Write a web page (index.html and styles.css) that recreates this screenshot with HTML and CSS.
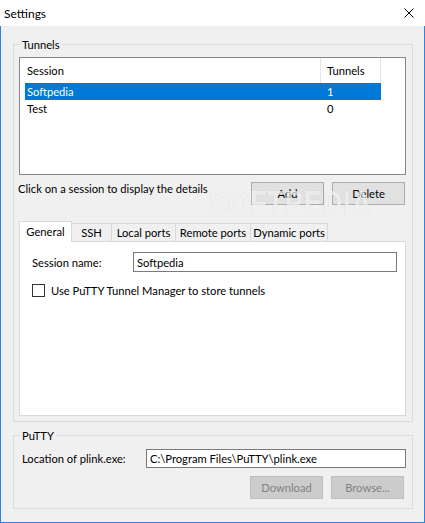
FILE: index.html
```html
<!DOCTYPE html>
<html lang="en">
<head>
    <meta charset="UTF-8">
    <title>Settings</title>
    <link rel="stylesheet" href="styles.css">
</head>
<body>
    <div class="window">
        <div class="titlebar">
            <span class="title">Settings</span>
            <svg class="close" width="10" height="10" viewBox="0 0 10 10">
                <path d="M0.5 0.5 L9.5 9.5 M9.5 0.5 L0.5 9.5" stroke="#000" stroke-width="1" fill="none"/>
            </svg>
        </div>

        <div class="client">
            <fieldset class="group group-tunnels">
                <legend>Tunnels</legend>

                <div class="listview">
                    <div class="lv-header">
                        <div class="lv-col lv-col-session">Session</div>
                        <div class="lv-col lv-col-count">Tunnels</div>
                    </div>
                    <div class="lv-row selected"><span>Softpedia</span><span class="count">1</span></div>
                    <div class="lv-row"><span>Test</span><span class="count">0</span></div>
                </div>

                <div class="actions">
                    <span class="hint">Click on a session to display the details</span>
                    <button class="btn">Add</button>
                    <button class="btn">Delete</button>
                </div>

                <div class="tabs">
                    <div class="tab active tab-general">General</div>
                    <div class="tab tab-ssh">SSH</div>
                    <div class="tab tab-local">Local ports</div>
                    <div class="tab tab-remote">Remote ports</div>
                    <div class="tab tab-dynamic">Dynamic ports</div>
                </div>
                <div class="tab-panel">
                    <div class="field">
                        <label class="field-label">Session name:</label>
                        <input class="textbox session-input" type="text" value="Softpedia">
                    </div>
                    <label class="check">
                        <span class="box"></span>
                        Use PuTTY Tunnel Manager to store tunnels
                    </label>
                </div>
            </fieldset>

            <fieldset class="group group-putty">
                <legend>PuTTY</legend>
                <div class="field plink-field">
                    <label class="field-label">Location of plink.exe:</label>
                    <input class="textbox plink-input" type="text" value="C:\Program Files\PuTTY\plink.exe">
                </div>
                <div class="putty-buttons">
                    <button class="btn" disabled>Download</button>
                    <button class="btn" disabled>Browse...</button>
                </div>
            </fieldset>
        </div>

        <div class="watermark">SOFTPEDIA</div>
    </div>
</body>
</html>
```

FILE: styles.css
```css
body {
    margin: 0;
    font-family: Lato, "Noto Sans", sans-serif;
    font-size: 11.2px;
    color: #000;
    background: #f0f0f0;
}
.window {
    position: relative;
    width: 425px;
    height: 523px;
    display: flex;
    flex-direction: column;
    background: #f0f0f0;
}
.titlebar {
    height: 26px;
    flex: none;
    background: #fff;
    display: flex;
    align-items: center;
    justify-content: space-between;
    padding-left: 4px;
    font-size: 12px;
}
.close {
    margin-right: 11px;
}
.client {
    flex: 1;
    border: 1px solid #2b85d8;
    border-top: 0;
    padding: 0 11px 0 12px;
}

/* group boxes */
.group {
    margin: 0;
    border: 1px solid #dcdcdc;
    padding: 0 6px 0 5px;
    width: 387px;
}
.group legend {
    padding: 0 2px;
    margin-left: 1px;
    line-height: 15px;
}
.group-tunnels {
    margin-top: 11px;
    padding-top: 5px;
    padding-bottom: 5px;
}
.group-putty {
    margin-top: 6px;
    padding-top: 6px;
    padding-bottom: 9px;
}

/* session list */
.listview {
    height: 116px;
    border: 1px solid #828790;
    background: #fff;
}
.lv-header {
    display: flex;
    height: 25px;
}
.lv-col {
    line-height: 25px;
    border-right: 1px solid #e5e5e5;
}
.lv-col-session {
    width: 293px;
    padding-left: 7px;
}
.lv-col-count {
    width: 53px;
    padding-left: 6px;
}
.lv-row {
    display: grid;
    grid-template-columns: 295px 1fr;
    width: 356px;
    height: 17px;
    line-height: 17px;
    margin-left: 5px;
}
.lv-row span {
    padding-left: 2px;
}
.lv-row .count {
    padding-left: 7px;
}
.lv-row.selected {
    background: #0078d7;
    color: #fff;
}

/* buttons */
.actions {
    display: flex;
    align-items: flex-start;
    margin-top: 7px;
    gap: 8px;
}
.hint {
    margin-left: -1px;
    margin-right: auto;
    line-height: 14px;
}
.btn {
    width: 73px;
    height: 23px;
    padding: 0;
    background: #e1e1e1;
    border: 1px solid #adadad;
    font-family: inherit;
    font-size: 11.2px;
    color: #000;
}
.actions .btn:last-child {
    margin-right: 1px;
}
.btn:disabled {
    background: #cccccc;
    border-color: #bfbfbf;
    color: #838383;
}

/* tabs */
.tabs {
    display: flex;
    align-items: flex-end;
    height: 19px;
    margin-top: 17px;
}
.tab {
    height: 17px;
    line-height: 17px;
    text-align: center;
    white-space: nowrap;
    background: #f0f0f0;
    border: 1px solid #d9d9d9;
    border-bottom: 0;
    margin-left: -1px;
}
.tab.active {
    position: relative;
    z-index: 1;
    height: 20px;
    line-height: 19px;
    margin-left: 0;
    margin-bottom: -1px;
    background: #fff;
}
.tab-general { width: 51px; }
.tab-ssh { width: 39px; }
.tab-local { width: 63px; }
.tab-remote { width: 74px; }
.tab-dynamic { width: 76px; }
.tab-panel {
    height: 163px;
    border: 1px solid #d9d9d9;
    background: #fff;
    padding: 10px 8px 0 12px;
}

/* form fields */
.field {
    display: flex;
    align-items: center;
}
.field-label {
    width: 101px;
}
.textbox {
    box-sizing: border-box;
    height: 20px;
    border: 1px solid #7a7a7a;
    padding: 0 3px;
    font-family: inherit;
    font-size: 11.2px;
    color: #000;
    background: #fff;
    outline: none;
}
.session-input {
    width: 264px;
}
.check {
    display: flex;
    align-items: center;
    margin-top: 12px;
    height: 13px;
}
.box {
    width: 11px;
    height: 11px;
    border: 1px solid #333;
    background: #fff;
    margin-right: 6px;
}
.plink-field {
    padding-left: 3px;
}
.plink-field .field-label {
    width: 124px;
}
.plink-input {
    width: 260px;
    height: 19px;
}
.putty-buttons {
    display: flex;
    justify-content: flex-end;
    gap: 8px;
    margin-top: 8px;
    margin-right: 2px;
}

/* softpedia watermark over the dialog */
.watermark {
    position: absolute;
    left: 209px;
    top: 183px;
    font-family: "Liberation Sans", sans-serif;
    font-weight: bold;
    font-size: 34px;
    line-height: 1.15;
    letter-spacing: 1px;
    color: rgba(255, 255, 255, 0.7);
    text-shadow: 0 0 1px rgba(0, 0, 0, 0.14);
    transform: scaleX(0.8);
    transform-origin: left top;
    pointer-events: none;
}
```
